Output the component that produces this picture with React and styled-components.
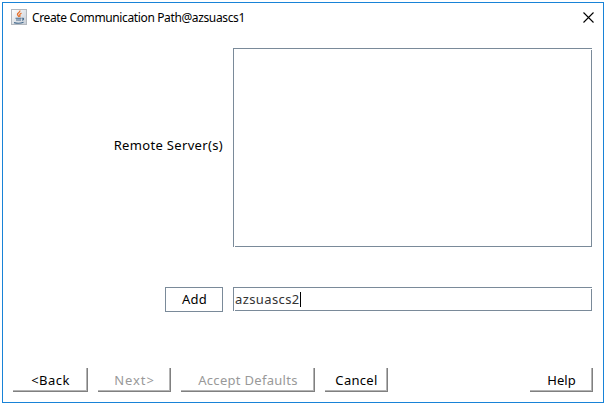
import React from "react";
import styled, { createGlobalStyle } from "styled-components";

const GlobalStyle = createGlobalStyle`
  * { box-sizing: border-box; }
  body { margin: 0; background: #fff; overflow: hidden; }
`;

const Screen = styled.div`
  width: 606px;
  height: 404px;
  padding: 2px 2px 1px 2px;
  background: #fff;
`;

const Dialog = styled.main`
  width: 602px;
  height: 401px;
  border: 1px solid #1883d7;
  display: flex;
  flex-direction: column;
  font: 13px/16px "Noto Sans", "DejaVu Sans", sans-serif;
  color: #000;
`;

const TitleBar = styled.header`
  height: 45px;
  flex: none;
  display: flex;
  align-items: flex-start;
  padding: 6px 9px 0 8px;
`;

const Title = styled.h1`
  margin: 1px auto 0 5px;
  font: 400 12px/16px "Noto Sans", "Open Sans", sans-serif;
  letter-spacing: ${(p) => p.$spacing};
  white-space: nowrap;
`;

const CloseButton = styled.button`
  border: 0;
  padding: 0;
  margin-top: 3px;
  width: 11px;
  height: 11px;
  background: none;
  svg { display: block; }
`;

const Form = styled.section`
  display: grid;
  grid-template-columns: 220px 359px;
  grid-template-rows: 199px 25px;
  column-gap: 10px;
  row-gap: 40px;
`;

const Label = styled.label`
  align-self: center;
  justify-self: end;
  margin-top: -6px;
  letter-spacing: ${(p) => p.$spacing};
  white-space: nowrap;
`;

const Sunken = styled.div`
  position: relative;
  border: 1px solid #7a8a99;
  background: #fff;
  height: ${(p) => p.$height}px;
  &::before, &::after {
    content: "";
    position: absolute;
    width: 1px;
    height: 1px;
    background: #fff;
  }
  &::before { top: 0; right: -1px; }
  &::after { bottom: -1px; left: 0; }
`;

const Value = styled.span`
  display: flex;
  align-items: center;
  height: 22px;
  padding-left: 1px;
  color: #333;
  letter-spacing: ${(p) => p.$spacing};
`;

const Caret = styled.i`
  width: 1px;
  height: 15px;
  background: #000;
`;

const AddButton = styled.button`
  justify-self: end;
  width: 58px;
  height: 25px;
  padding: 0 0 2px 1px;
  border: 1px solid #7a8a99;
  background: #fff;
  color: #000;
  font: inherit;
  letter-spacing: 0.3px;
`;

const Footer = styled.footer`
  margin-top: auto;
  padding: 0 10px 10px;
  display: flex;
  gap: 10px;
`;

const RaisedButton = styled.button`
  width: ${(p) => p.$width}px;
  height: 24px;
  margin-left: ${(p) => (p.$end ? "auto" : "0")};
  padding: 0;
  border: 0;
  background: #fff;
  box-shadow: inset -1px -1px #808080, inset -2px -2px #b4b4b4;
  font: inherit;
  letter-spacing: ${(p) => p.$spacing || "0.3px"};
  white-space: nowrap;
  color: #000;
  &:disabled { color: #999; }
`;

function JavaIcon() {
  return (
    <svg width="16" height="16" viewBox="0 0 16 16" fill="none">
      <defs>
        <linearGradient id="tile" x2="1" y2="1">
          <stop stopColor="#fff" />
          <stop offset="1" stopColor="#c5ccd5" />
        </linearGradient>
      </defs>
      <rect x=".5" y=".5" width="15" height="15" fill="url(#tile)" stroke="#b3b8be" />
      <path d="M8.800 1.500c.8 2-3 2.500-2.300 4.200l1.500 2.300M10.500 4.200C8.300 5.200 8.400 6 9.200 7.600" stroke="#e8702a" strokeWidth="1.300" />
      <path d="M4.500 9.300h6M5 11h5M3 13.600c3 .8 7 .7 9.500-.4M11 9.300c2.200-.5 2 1.400 0 1.900" stroke="#44698c" strokeWidth="1.100" />
    </svg>
  );
}

export default function App() {
  return (
    <>
      <GlobalStyle />
      <Screen>
        <Dialog>
          <TitleBar>
            <JavaIcon />
            <Title $spacing="-0.37px">Create Communication Path@azsuascs1</Title>
            <CloseButton aria-label="Close">
              <svg width="11" height="11" viewBox="0 0 11 11">
                <path d="M.5 .5l10 10M10.500 .5l-10 10" stroke="#000" strokeWidth="1.100" />
              </svg>
            </CloseButton>
          </TitleBar>
          <Form>
            <Label $spacing="0.33px">Remote Server(s)</Label>
            <Sunken $height={199} />
            <AddButton>Add</AddButton>
            <Sunken $height={24}>
              <Value $spacing="0.4px">azsuascs2<Caret /></Value>
            </Sunken>
          </Form>
          <Footer>
            <RaisedButton $width={75} $spacing="0.45px">&lt;Back</RaisedButton>
            <RaisedButton $width={73} $spacing="0.9px" disabled>Next&gt;</RaisedButton>
            <RaisedButton $width={134} disabled>Accept Defaults</RaisedButton>
            <RaisedButton $width={63}>Cancel</RaisedButton>
            <RaisedButton $width={63} $spacing="0px" $end>Help</RaisedButton>
          </Footer>
        </Dialog>
      </Screen>
    </>
  );
}
